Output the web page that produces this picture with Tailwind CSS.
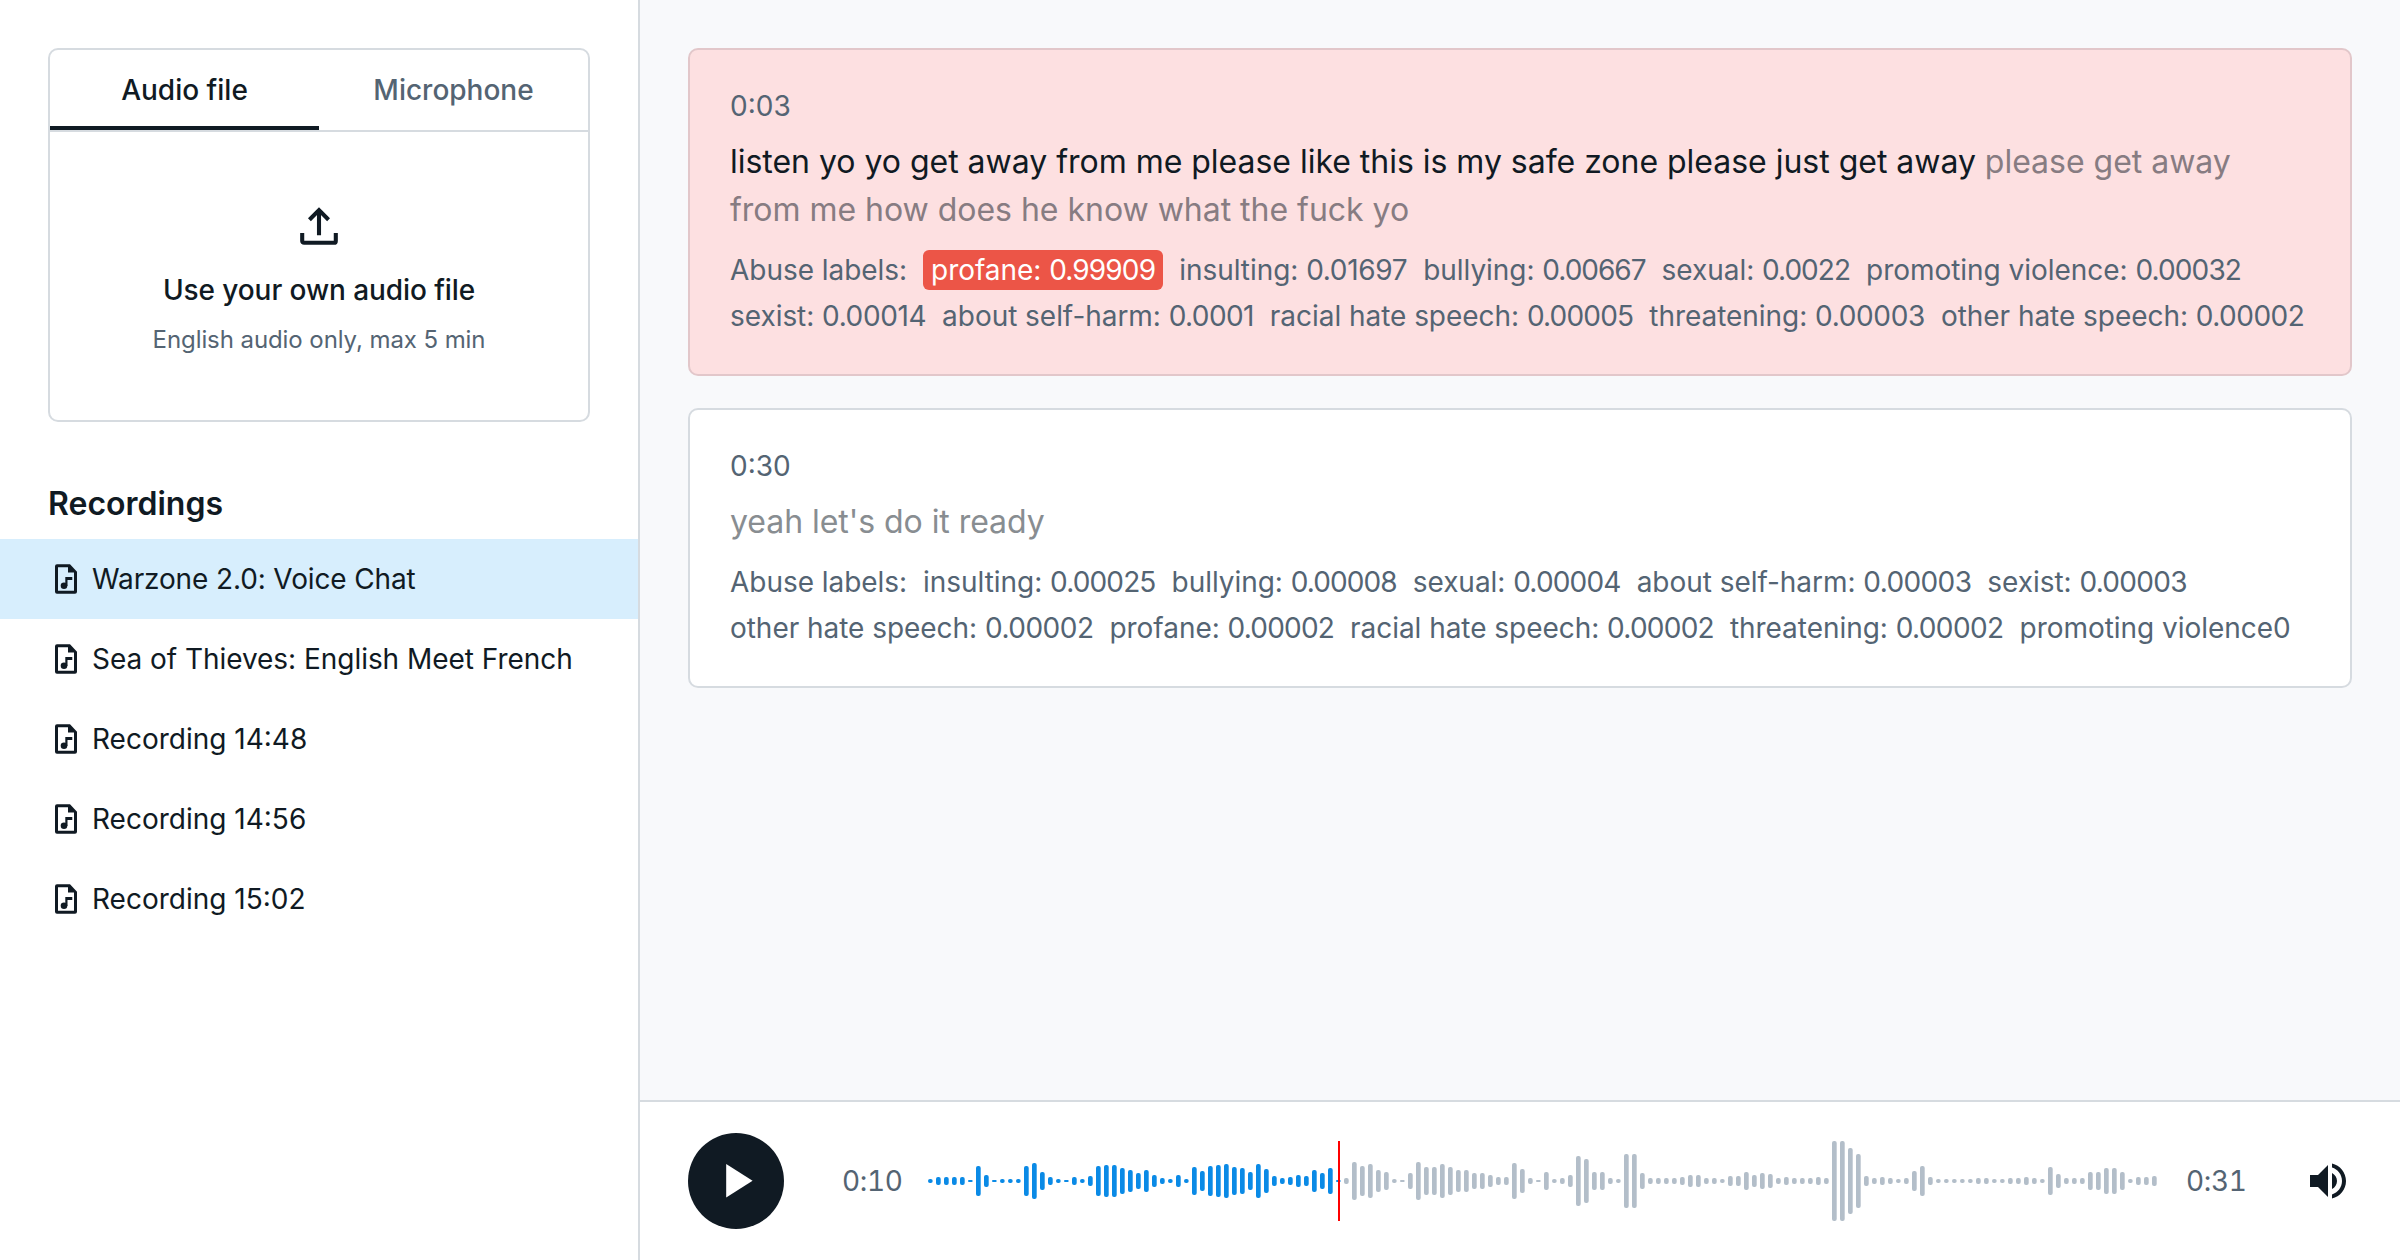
<!DOCTYPE html>
<html lang="en">
<head>
<meta charset="utf-8">
<title>Voice moderation</title>
<script src="https://cdn.jsdelivr.net/npm/@tailwindcss/browser@4"></script>
</head>
<body class="flex h-[1260px] w-[2400px] overflow-hidden bg-white font-['Inter',sans-serif] text-[28px] leading-[40px] text-[#101a23]">
<svg class="hidden"><symbol id="audio" viewBox="0 0 22 30"><path fill-rule="evenodd" d="M2 .3h13l7 7.400V27.700a2 2 0 0 1-2 2H2a2 2 0 0 1-2-2V2.300a2 2 0 0 1 2-2zM3 3.300v23.400h16V8.500h-6V3.300z"/><circle cx="9" cy="21.800" r="3.300"/><path d="M10.300 12.900h7v3h-4.800V22h-2.200z"/></symbol></svg>
<aside class="w-[640px] shrink-0 border-r-2 border-[#d6dbe0]">
  <div class="mx-12 mt-12 h-[374px] w-[542px] rounded-[10px] border-2 border-[#d6dbe0]">
    <div class="flex h-[82px] border-b-2 border-[#d6dbe0] font-medium">
      <div class="flex w-1/2 items-center justify-center border-b-4 border-[#101a23] pt-1">Audio file</div>
      <div class="flex w-1/2 items-center justify-center border-b-4 border-transparent pt-1 text-[#546473]">Microphone</div>
    </div>
    <div class="flex flex-col items-center pt-[66px]">
      <svg class="size-14" viewBox="0 0 24 24" fill="none" stroke="currentColor" stroke-width="1.750"><path d="M4.800 15v3.400a.8.8 0 0 0 .8.8h12.800a.8.8 0 0 0 .8-.8V15M12 16V5.200M7.900 9.300 12 5.200l4.100 4.100"/></svg>
      <div class="mt-4 font-medium tracking-[-0.08px]">Use your own audio file</div>
      <div class="mt-3 text-2xl leading-[36px] tracking-[-0.08px] text-[#546473]">English audio only, max 5 min</div>
    </div>
  </div>
  <h2 class="mt-[58px] ml-12 text-[32px] leading-[48px] font-semibold">Recordings</h2>
  <ul class="mt-[11px]">
    <li class="flex h-20 items-center gap-[15px] bg-[#d7eefd] pl-[55px] tracking-[-0.13px]"><svg class="h-[30px] w-[22px] fill-current"><use href="#audio"/></svg>Warzone 2.0: Voice Chat</li>
    <li class="flex h-20 items-center gap-[15px] pl-[55px] tracking-[-0.04px]"><svg class="h-[30px] w-[22px] fill-current"><use href="#audio"/></svg>Sea of Thieves: English Meet French</li>
    <li class="flex h-20 items-center gap-[15px] pl-[55px]"><svg class="h-[30px] w-[22px] fill-current"><use href="#audio"/></svg>Recording 14:48</li>
    <li class="flex h-20 items-center gap-[15px] pl-[55px]"><svg class="h-[30px] w-[22px] fill-current"><use href="#audio"/></svg>Recording 14:56</li>
    <li class="flex h-20 items-center gap-[15px] pl-[55px]"><svg class="h-[30px] w-[22px] fill-current"><use href="#audio"/></svg>Recording 15:02</li>
  </ul>
</aside>
<main class="flex min-w-0 flex-1 flex-col">
  <section class="flex flex-1 flex-col gap-8 bg-[#f8f9fb] px-12 pt-12">
    <article class="h-[328px] rounded-[10px] border-2 border-[#e2c7ca] bg-[#fde0e1] px-10 pt-9 text-[#546473]">
      <div>0:03</div>
      <p class="mt-3 text-[32px] leading-[48px] tracking-[-0.02px] whitespace-nowrap text-[#101a23]">listen yo yo get away from me please like this is my safe zone please just get away <span class="text-[#877c82]">please get away<br>from me how does he know what the fuck yo</span></p>
      <div class="mt-4 flex gap-4 tracking-[-0.04px] whitespace-nowrap">
        <span>Abuse labels:</span>
        <span class="rounded-md bg-[#ec5547] px-2 text-white">profane: <span class="tracking-[-0.85px]">0.99909</span></span>
        <span>insulting: <span class="tracking-[-0.35px]">0.01697</span></span>
        <span>bullying: <span class="tracking-[-1px]">0.00667</span></span>
        <span>sexual: <span class="tracking-[-0.95px]">0.0022</span></span>
        <span>promoting violence: <span class="tracking-[-0.85px]">0.00032</span></span>
      </div>
      <div class="mt-1.5 flex gap-4 tracking-[-0.04px] whitespace-nowrap">
        <span>sexist: <span class="tracking-[-0.4px]">0.00014</span></span>
        <span>about self-harm: <span class="tracking-[-0.6px]">0.0001</span></span>
        <span>racial hate speech: <span class="tracking-[-0.8px]">0.00005</span></span>
        <span>threatening: <span class="tracking-[-0.35px]">0.00003</span></span>
        <span>other hate speech: <span class="tracking-[-0.5px]">0.00002</span></span>
      </div>
    </article>
    <article class="h-[280px] rounded-[10px] border-2 border-[#d6dbe0] bg-white px-10 pt-9 text-[#546473]">
      <div>0:30</div>
      <p class="mt-3 text-[32px] leading-[48px] tracking-[-0.05px] text-[#888d91]">yeah let's do it ready</p>
      <div class="mt-4 flex gap-4 tracking-[-0.04px] whitespace-nowrap">
        <span>Abuse labels:</span>
        <span>insulting: <span class="tracking-[-0.85px]">0.00025</span></span>
        <span>bullying: <span class="tracking-[-0.9px]">0.00008</span></span>
        <span>sexual: <span class="tracking-[-0.8px]">0.00004</span></span>
        <span>about self-harm: <span class="tracking-[-0.6px]">0.00003</span></span>
        <span>sexist: <span class="tracking-[-0.7px]">0.00003</span></span>
      </div>
      <div class="mt-1.5 flex gap-4 tracking-[-0.04px] whitespace-nowrap">
        <span>other hate speech: <span class="tracking-[-0.5px]">0.00002</span></span>
        <span>profane: <span class="tracking-[-0.8px]">0.00002</span></span>
        <span>racial hate speech: <span class="tracking-[-0.75px]">0.00002</span></span>
        <span>threatening: <span class="tracking-[-0.6px]">0.00002</span></span>
        <span>promoting violence0</span>
      </div>
    </article>
  </section>
  <footer class="flex h-40 items-center border-t-2 border-[#d6dbe0] pl-12 text-[#546473] tabular-nums">
    <button class="flex size-24 items-center justify-center rounded-full bg-[#101a23]"><svg class="size-[57.6px] fill-white" viewBox="0 0 24 24"><path d="M8 5v14l11-7z"/></svg></button>
    <span class="ml-[58px] w-[86px] tracking-[-0.35px]">0:10</span>
    <svg id="wave" class="h-20 w-[1232px]" viewBox="0 0 1232 80"></svg>
    <span class="ml-[26px] w-[118px] tracking-[-0.35px]">0:31</span>
    <svg class="size-12 fill-[#101a23]" viewBox="0 0 24 24"><path d="M3 9v6h4l5 5V4L7 9H3zm13.500 3c0-1.770-1.020-3.290-2.500-4.030v8.050c1.480-.73 2.500-2.250 2.500-4.020zM14 3.230v2.060c2.890.86 5 3.540 5 6.710s-2.110 5.850-5 6.710v2.060c4.010-.91 7-4.490 7-8.770s-2.990-7.860-7-8.770z"/></svg>
  </footer>
</main>
<script>
const levels = [4,8,8,8,8,2,30,12,2,4,4,4,30,36,18,8,4,2,8,4,10,30,32,32,26,22,16,22,12,6,4,12,4,28,20,30,32,34,28,26,18,34,24,10,6,8,12,10,22,16,26,2,
6,38,30,34,22,18,4,2,16,38,28,28,34,28,22,22,16,16,12,8,8,36,24,6,2,18,4,6,12,50,44,18,18,6,4,54,54,16,6,6,6,6,8,12,12,6,6,4,10,10,18,12,16,14,6,8,6,6,6,8,6,80,80,66,54,10,6,8,6,4,6,20,30,8,4,4,4,4,4,6,6,4,4,6,6,8,6,4,28,14,6,6,6,18,18,26,26,18,4,8,8,10];
const played = 52;
document.getElementById('wave').innerHTML = levels.map((h, i) =>
  `<rect x="${i * 8}" y="${40 - h / 2}" width="4.7" height="${h}" rx="${Math.min(2, h / 2)}" fill="${i < played ? '#0a8ae6' : '#b3bec9'}"/>`
).join('') + '<rect x="410" y="0" width="2" height="80" fill="#ff0000"/>';
</script>
</body>
</html>
